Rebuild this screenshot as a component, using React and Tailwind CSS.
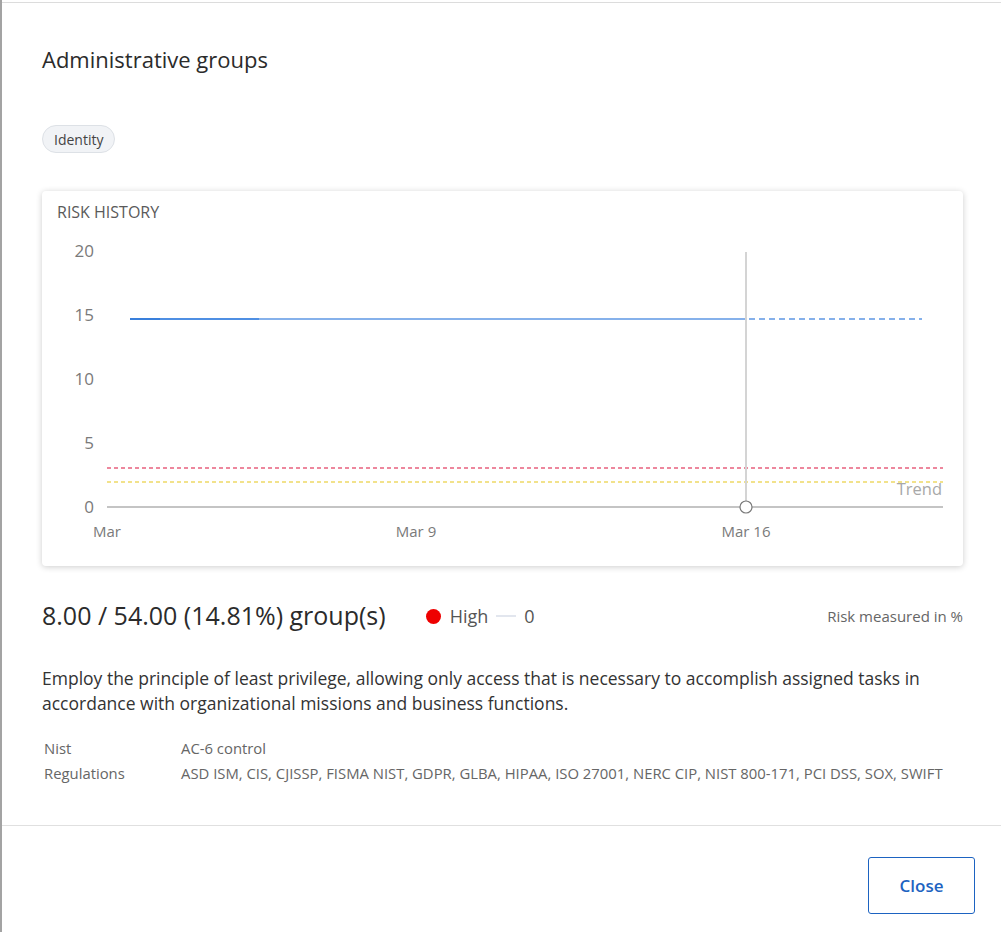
import React from 'react'

const font = { fontFamily: '"Open Sans", "Noto Sans", sans-serif' }

function RiskChart() {
  const yLabels = [
    { v: '20', y: 27.5 },
    { v: '15', y: 91.5 },
    { v: '10', y: 155.5 },
    { v: '5', y: 219.5 },
    { v: '0', y: 283 },
  ]
  const xLabels = [
    { t: 'Mar', x: 65 },
    { t: 'Mar 9', x: 374 },
    { t: 'Mar 16', x: 704 },
  ]

  return (
    <svg width="921" height="343" className="block" style={font}>
      {yLabels.map((l) => (
        <text key={l.v} x="52" y={l.y} textAnchor="end" dominantBaseline="central" fontSize="17" fill="#7a7a7a">
          {l.v}
        </text>
      ))}

      {/* thresholds */}
      <line x1="65" y1="245" x2="901" y2="245" stroke="#e8607e" strokeWidth="1.5" strokeDasharray="4 3" />
      <line x1="65" y1="259" x2="901" y2="259" stroke="#e6c619" strokeWidth="1.2" strokeDasharray="4 3" />

      {/* axis */}
      <line x1="65" y1="284" x2="901" y2="284" stroke="#8a8a8a" strokeWidth="1.2" />

      {/* risk line */}
      <line x1="88" y1="96" x2="704" y2="96" stroke="#5e97e4" strokeWidth="1.5" />
      <line x1="88" y1="96" x2="118" y2="96" stroke="#1f6fd6" strokeWidth="1.5" />
      <line x1="118" y1="96" x2="217" y2="96" stroke="#3d85e0" strokeWidth="1.5" />
      <line x1="707" y1="96" x2="880" y2="96" stroke="#5e97e4" strokeWidth="1.5" strokeDasharray="6 4" />

      {/* cursor */}
      <line x1="704" y1="29" x2="704" y2="278" stroke="#d4d4d4" strokeWidth="2" />
      <circle cx="704" cy="284" r="6" fill="#fff" stroke="#7a7a7a" strokeWidth="1.2" />

      <text x="900" y="265.5" textAnchor="end" dominantBaseline="central" fontSize="16.5" fill="#a8a8a8">
        Trend
      </text>

      {xLabels.map((l) => (
        <text key={l.t} x={l.x} y="308" textAnchor="middle" dominantBaseline="central" fontSize="15" fill="#7a7a7a">
          {l.t}
        </text>
      ))}
    </svg>
  )
}

function App() {
  return (
    <div className="min-h-[932px] bg-white border-l-2 border-[#a3a3a3] overflow-hidden" style={font}>
      <div className="mt-[2px] border-t border-[#dcdcdc] min-h-[930px] w-[1000px]">

        {/* BODY */}
        <div className="pl-[40px] pr-[39px] pt-[41px] pb-[39px]">

          <h1 className="text-[22px] leading-[30px] text-[#2b2b2b]">
            Administrative groups
          </h1>

          <div className="mt-[51px] flex">
            <span className="h-[28px] px-[11px] flex items-center rounded-full bg-[#f1f3f6] border border-[#dde1e6] text-[14px] text-[#444]">
              Identity
            </span>
          </div>

          {/* CHART CARD */}
          <div className="mt-[38px] w-[921px] h-[375px] bg-white rounded-[4px] shadow-[0_1px_6px_rgba(0,0,0,0.2)]">
            <div className="pt-[11px] pb-[1px] px-[15px] text-[16px] leading-[20px] text-[#5a5a5a]">
              RISK HISTORY
            </div>
            <RiskChart />
          </div>

          {/* STATS */}
          <div className="mt-[35px] flex items-center h-[30px]">
            <span className="text-[25px] text-[#2b2b2b]">
              8.00 / 54.00 (14.81%) group(s)
            </span>
            <span className="ml-[40px] w-[15px] h-[15px] rounded-full bg-[#ee0000]"></span>
            <span className="ml-[9px] text-[18px] text-[#555]">High</span>
            <span className="ml-[8px] w-[20px] h-[2px] bg-[#e2e6ee]"></span>
            <span className="ml-[8px] text-[18px] text-[#555]">0</span>
            <span className="ml-auto text-[15px] text-[#666]">Risk measured in %</span>
          </div>

          {/* DESCRIPTION */}
          <p className="mt-[35px] text-[17.5px] leading-[25px] text-[#333]">
            Employ the principle of least privilege, allowing only access that is necessary to accomplish assigned tasks in accordance with organizational missions and business functions.
          </p>

          <div className="mt-[20px] pl-[2px] grid grid-cols-[137px_1fr] text-[14.85px] leading-[25px] text-[#666]">
            <div>Nist</div>
            <div>AC-6 control</div>
            <div>Regulations</div>
            <div>ASD ISM, CIS, CJISSP, FISMA NIST, GDPR, GLBA, HIPAA, ISO 27001, NERC CIP, NIST 800-171, PCI DSS, SOX, SWIFT</div>
          </div>

        </div>

        {/* FOOTER */}
        <div className="border-t border-[#e0e0e0] pt-[31px] pr-[27px] flex justify-end">
          <button className="w-[107px] h-[57px] border border-[#1d63c1] rounded-[3px] text-[17px] font-semibold text-[#1d63c1] bg-white">
            Close
          </button>
        </div>

      </div>
    </div>
  )
}

export default App
